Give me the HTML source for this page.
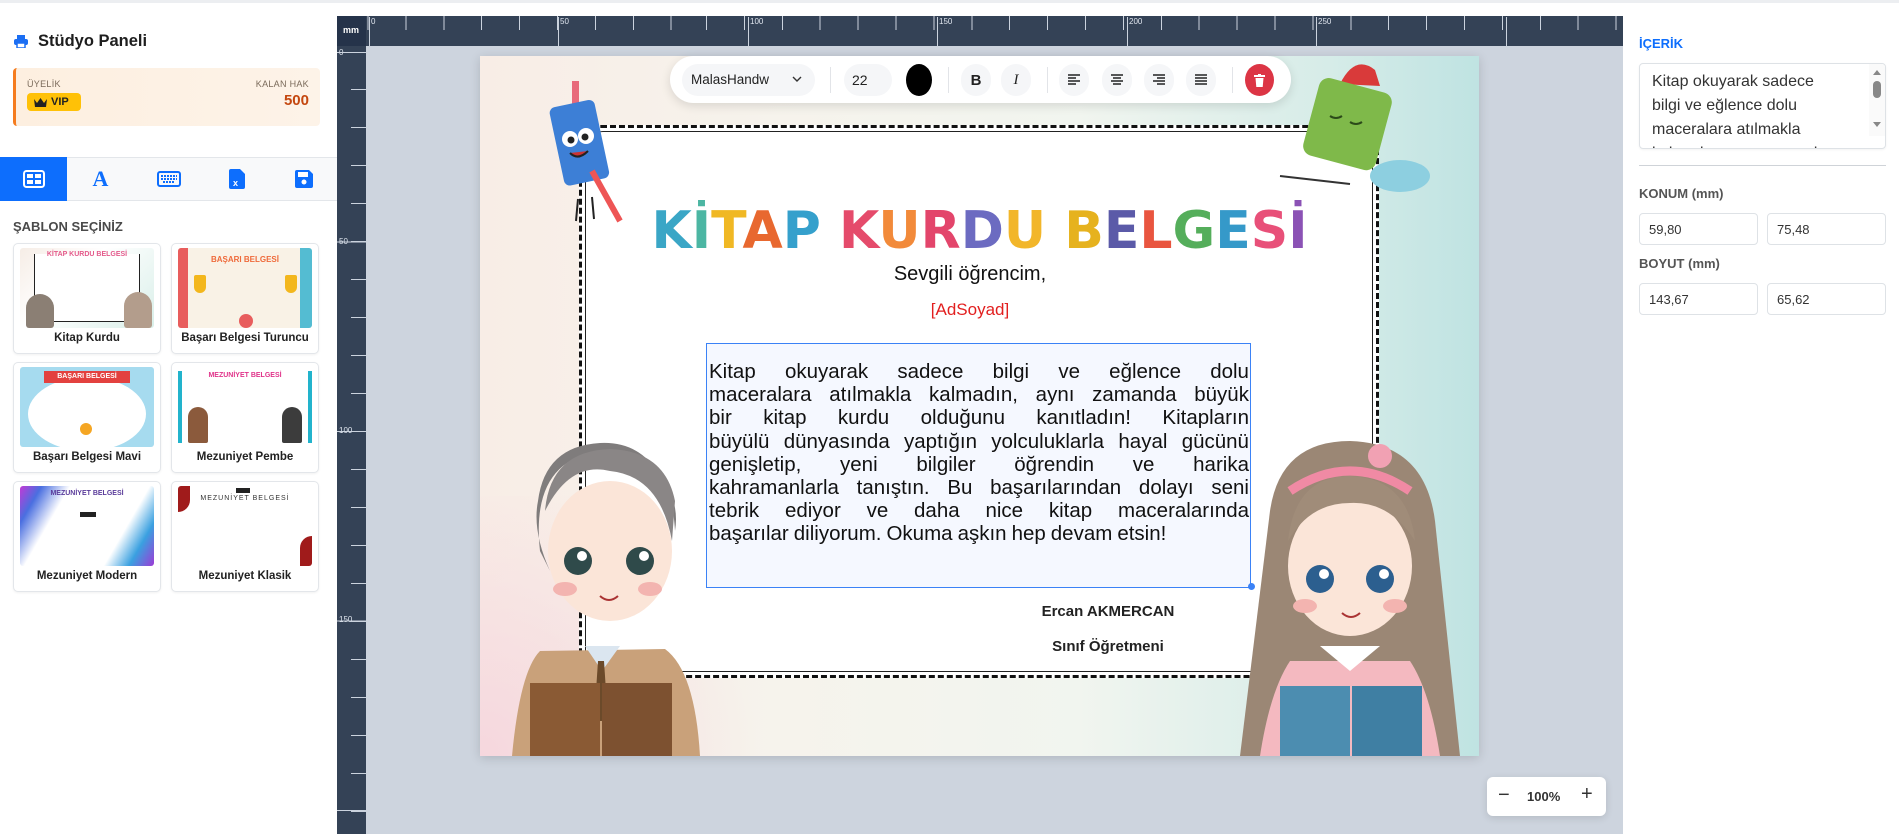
<!DOCTYPE html>
<html><head><meta charset="utf-8">
<style>
*{box-sizing:border-box;margin:0;padding:0}
body{width:1899px;height:834px;overflow:hidden;background:#fff;font-family:"Liberation Sans",sans-serif;position:relative;color:#222}
.abs{position:absolute}
.topline{left:0;top:0;width:1899px;height:3px;background:#eceef1}
.side{left:0;top:3px;width:337px;height:831px;background:#fff}
.card{position:absolute;width:148px;height:111px;border:1px solid #e3e6ea;border-radius:5px;background:#fff;box-shadow:0 1px 2px rgba(0,0,0,.06)}
.card .th{position:absolute;left:6px;top:4px;width:134px;height:80px;border-radius:3px;overflow:hidden}
.card .lb{position:absolute;left:0;right:0;top:88px;text-align:center;font-weight:bold;font-size:11.5px;color:#222}
.tab{position:absolute;top:157px;height:42px;width:67px;display:flex;align-items:center;justify-content:center}
.inp{position:absolute;height:32px;border:1px solid #dee2e6;border-radius:4px;font-size:13px;padding:8px 9px;color:#333}
.lbl{position:absolute;font-size:13px;font-weight:bold;color:#555}
.tb-btn{position:absolute;top:64px;width:30px;height:32px;border-radius:16px;background:#f5f6f8;display:flex;align-items:center;justify-content:center}
.body div{height:23.2px;text-align:justify;text-align-last:justify;white-space:nowrap;display:flex;justify-content:space-between}
.body div.last{justify-content:flex-start;gap:5px}
</style></head><body>
<div class="abs topline"></div>

<!-- SIDEBAR -->
<div class="abs side">
 <svg class="abs" style="left:14px;top:32px" width="14" height="13" viewBox="0 0 14 13"><rect x="3" y="0" width="8" height="4" fill="#1b6ef3"/><rect x="0" y="4" width="14" height="6" rx="2" fill="#1b6ef3"/><rect x="3" y="8" width="8" height="5" fill="#fff" stroke="#1b6ef3" stroke-width="1.5"/></svg>
 <div class="abs" style="left:38px;top:29px;font-size:16.5px;font-weight:bold;color:#1e1e1e">Stüdyo Paneli</div>
 <div class="abs" style="left:13px;top:65px;width:307px;height:58px;border-radius:4px;background:linear-gradient(90deg,#fdefe0,#fdf3e8);border-left:3px solid #f57c1f">
  <div class="abs" style="left:11px;top:11px;font-size:9px;color:#7a6a5a;letter-spacing:.3px">ÜYELİK</div>
  <div class="abs" style="left:11px;top:25px;width:54px;height:18px;border-radius:4px;background:#ffc107;font-size:11px;font-weight:bold;color:#222;padding:3px 0 0 24px">VIP
   <svg class="abs" style="left:7px;top:5px" width="13" height="9" viewBox="0 0 13 9"><path d="M0 1 L3 5 L6.5 0 L10 5 L13 1 L12 9 L1 9Z" fill="#222"/></svg></div>
  <div class="abs" style="right:11px;top:11px;font-size:9px;color:#7a6a5a;letter-spacing:.3px">KALAN HAK</div>
  <div class="abs" style="right:11px;top:24px;font-size:15px;font-weight:bold;color:#c4470f">500</div>
 </div>
 <div class="abs" style="left:0;top:154px;width:337px;height:44px;border-top:1px solid #e3e6ea;border-bottom:1px solid #e3e6ea;background:#f8f9fa"></div>
 <div class="tab" style="left:0;top:154px;height:44px;background:#0d6efd"><svg width="22" height="18" viewBox="0 0 22 18"><rect x="1" y="1" width="20" height="16" rx="2.5" fill="none" stroke="#fff" stroke-width="2"/><rect x="4" y="4" width="6" height="4" fill="#fff"/><rect x="12" y="4" width="6" height="4" fill="#fff"/><rect x="4" y="10" width="6" height="4" fill="#fff"/><rect x="12" y="10" width="6" height="4" fill="#fff"/></svg></div>
 <div class="tab" style="left:67px;top:154px;height:44px"><span style="font-size:22px;font-weight:bold;color:#0d6efd;font-family:'Liberation Serif',serif">A</span></div>
 <div class="tab" style="left:135px;top:154px;height:44px"><svg width="24" height="16" viewBox="0 0 24 16"><rect x="1" y="1" width="22" height="14" rx="2" fill="none" stroke="#0d6efd" stroke-width="2"/><path d="M4 5h16M4 8h16M6 11h12" stroke="#0d6efd" stroke-width="2" stroke-dasharray="2 1"/></svg></div>
 <div class="tab" style="left:203px;top:154px;height:44px"><svg width="16" height="20" viewBox="0 0 16 20"><path d="M0 2Q0 0 2 0H11L16 5V18Q16 20 14 20H2Q0 20 0 18Z" fill="#0d6efd"/><text x="4" y="17" font-size="9" fill="#fff" font-family="Liberation Sans" font-weight="bold">x</text></svg></div>
 <div class="tab" style="left:270px;top:154px;height:44px"><svg width="18" height="18" viewBox="0 0 18 18"><path d="M0 2Q0 0 2 0H14L18 4V16Q18 18 16 18H2Q0 18 0 16Z" fill="#0d6efd"/><rect x="3" y="2" width="10" height="5" fill="#fff"/><circle cx="9" cy="12" r="2.5" fill="#fff"/></svg></div>
 <div class="abs" style="left:13px;top:216px;font-size:13px;font-weight:bold;color:#4a4a4a">ŞABLON SEÇİNİZ</div>

 <div class="card" style="left:13px;top:240px"><div class="th" style="background:linear-gradient(135deg,#f6ede6,#fff 40%,#d9efe9)"><div class="abs" style="left:14px;top:6px;width:106px;height:68px;border:1.5px solid #222;border-top:none;background:#fff"></div><div class="abs" style="left:0;right:0;top:3px;text-align:center;font-size:7px;font-weight:bold;color:#e45b8c">KİTAP KURDU BELGESİ</div><div class="abs" style="left:6px;top:46px;width:28px;height:34px;border-radius:14px 14px 3px 3px;background:#8b7f74"></div><div class="abs" style="left:104px;top:44px;width:28px;height:36px;border-radius:14px 14px 3px 3px;background:#b39d8c"></div></div><div class="lb">Kitap Kurdu</div></div>
 <div class="card" style="left:171px;top:240px"><div class="th" style="background:#f9f2e6"><div class="abs" style="left:0;top:0;width:10px;height:80px;background:#e85d5d"></div><div class="abs" style="right:0;top:0;width:12px;height:80px;background:#54bcd2"></div><div class="abs" style="left:0;right:0;top:7px;text-align:center;font-size:8px;font-weight:bold;color:#ef6a3a">BAŞARI BELGESİ</div><div class="abs" style="left:16px;top:27px;width:12px;height:18px;background:#f3b71d;border-radius:2px 2px 6px 6px"></div><div class="abs" style="left:107px;top:27px;width:12px;height:18px;background:#f3b71d;border-radius:2px 2px 6px 6px"></div><div class="abs" style="left:61px;top:66px;width:14px;height:14px;border-radius:7px;background:#e85d5d"></div></div><div class="lb">Başarı Belgesi Turuncu</div></div>
 <div class="card" style="left:13px;top:359px"><div class="th" style="background:#a6dbef"><div class="abs" style="left:8px;top:10px;width:118px;height:74px;border-radius:50%;background:#fff"></div><div class="abs" style="left:24px;top:4px;width:86px;height:12px;background:#e3413f;color:#fff;font-size:7px;text-align:center;font-weight:bold;padding-top:2px">BAŞARI BELGESİ</div><div class="abs" style="left:60px;top:56px;width:12px;height:12px;border-radius:6px;background:#f5a623"></div></div><div class="lb">Başarı Belgesi Mavi</div></div>
 <div class="card" style="left:171px;top:359px"><div class="th" style="background:#fff"><div class="abs" style="left:0;top:4px;width:4px;height:72px;background:#22b3cc"></div><div class="abs" style="right:0;top:4px;width:4px;height:72px;background:#22b3cc"></div><div class="abs" style="left:0;right:0;top:5px;text-align:center;font-size:7px;font-weight:bold;color:#e0338a">MEZUNİYET BELGESİ</div><div class="abs" style="left:10px;top:40px;width:20px;height:36px;background:#8b5a3c;border-radius:10px 10px 2px 2px"></div><div class="abs" style="left:104px;top:40px;width:20px;height:36px;background:#3c3c3c;border-radius:10px 10px 2px 2px"></div></div><div class="lb">Mezuniyet Pembe</div></div>
 <div class="card" style="left:13px;top:478px"><div class="th" style="background:linear-gradient(120deg,#c23ad6 0,#4a6fe0 12%,#fff 28%,#fff 72%,#3aa0e0 86%,#9d3ad6 100%)"><div class="abs" style="left:0;right:0;top:4px;text-align:center;font-size:7px;font-weight:bold;color:#5a3b9a">MEZUNİYET BELGESİ</div><div class="abs" style="left:60px;top:26px;width:16px;height:5px;background:#222"></div></div><div class="lb">Mezuniyet Modern</div></div>
 <div class="card" style="left:171px;top:478px"><div class="th" style="background:#fff"><div class="abs" style="left:0;top:0;width:12px;height:26px;background:#a01b1b;border-radius:0 0 12px 0"></div><div class="abs" style="right:0;bottom:0;width:12px;height:30px;background:#a01b1b;border-radius:12px 0 0 0"></div><div class="abs" style="left:0;right:0;top:9px;text-align:center;font-size:7px;color:#333;letter-spacing:1px">MEZUNİYET BELGESİ</div><div class="abs" style="left:58px;top:2px;width:14px;height:5px;background:#222"></div></div><div class="lb">Mezuniyet Klasik</div></div>
</div>

<!-- RULERS -->
<div class="abs" style="left:337px;top:16px;width:1286px;height:30px;background:#344256;
 background-image:repeating-linear-gradient(90deg,#cbd3de 0 1px,transparent 1px 37.9px);background-position:369px 0;background-size:100% 14px;background-repeat:repeat-x"></div>
<div class="abs" style="left:337px;top:16px;width:29px;height:30px;background:#25334a;color:#fff;font-size:9px;font-weight:bold;padding:9px 0 0 6px">mm</div>
<div class="abs" style="left:337px;top:46px;width:29px;height:788px;background:#344256"></div>
<div class="abs" style="left:0;top:0;font-size:8px;color:#dfe5ee">
 <div class="abs" style="left:369px;top:17px;width:1px;height:29px;background:#cbd3de"></div><div class="abs" style="left:371px;top:17px">0</div>
 <div class="abs" style="left:558px;top:17px;width:1px;height:29px;background:#cbd3de"></div><div class="abs" style="left:560px;top:17px">50</div>
 <div class="abs" style="left:748px;top:17px;width:1px;height:29px;background:#cbd3de"></div><div class="abs" style="left:750px;top:17px">100</div>
 <div class="abs" style="left:937px;top:17px;width:1px;height:29px;background:#cbd3de"></div><div class="abs" style="left:939px;top:17px">150</div>
 <div class="abs" style="left:1127px;top:17px;width:1px;height:29px;background:#cbd3de"></div><div class="abs" style="left:1129px;top:17px">200</div>
 <div class="abs" style="left:1316px;top:17px;width:1px;height:29px;background:#cbd3de"></div><div class="abs" style="left:1318px;top:17px">250</div>
 <div class="abs" style="left:1506px;top:17px;width:1px;height:29px;background:#cbd3de"></div>
 <div class="abs" style="left:339px;top:48px">0</div>
 <div class="abs" style="left:339px;top:237px">50</div>
 <div class="abs" style="left:339px;top:426px">100</div>
 <div class="abs" style="left:339px;top:615px">150</div>
</div>
<div class="abs" style="left:351px;top:46px;width:15px;height:788px;background-image:repeating-linear-gradient(180deg,transparent 0 37px,#cbd3de 37px 38px);background-position:0 6px"></div>
<div class="abs" style="left:337px;top:46px;width:29px;height:788px;background-image:repeating-linear-gradient(180deg,#cbd3de 0 1px,transparent 1px 189.5px);background-position:0 6px"></div>

<!-- CANVAS -->
<div class="abs" style="left:366px;top:46px;width:1257px;height:788px;background:#cdd4de"></div>
<div class="abs" style="left:480px;top:56px;width:999px;height:700px;overflow:hidden;background:linear-gradient(90deg,#f8ede6 0%,#f6f3ec 30%,#f1f5ef 60%,#d6ece8 85%,#bfe3e2 100%);box-shadow:0 2px 10px rgba(0,0,0,.15)">
 <div class="abs" style="left:0;bottom:0;width:300px;height:260px;background:radial-gradient(circle at 0 100%,#f6d7de,transparent 70%)"></div>
 <div class="abs" style="left:99px;top:69px;width:800px;height:553px;border:3px dashed #111;border-radius:22px;background:#fff"></div>
 <div class="abs" style="left:105px;top:75px;width:788px;height:541px;border:1.5px solid #222;border-radius:18px"></div>
 <div class="abs" style="left:0;width:999px;top:146px;text-align:center;font-size:52px;font-weight:bold;letter-spacing:0;font-family:'DejaVu Sans',sans-serif;line-height:58px">
  <span style="color:#3aa6c6">K</span><span style="color:#4cb6a3">İ</span><span style="color:#f0b824">T</span><span style="color:#e8682f">A</span><span style="color:#35a0cc">P</span> <span style="color:#e54b6b">K</span><span style="color:#f28a3a">U</span><span style="color:#e3456b">R</span><span style="color:#6c6bc1">D</span><span style="color:#f2b62a">U</span> <span style="color:#e6b21e">B</span><span style="color:#5b5aa8">E</span><span style="color:#e9553f">L</span><span style="color:#55ae5b">G</span><span style="color:#3599c9">E</span><span style="color:#e85079">S</span><span style="color:#8b52b5">İ</span></div>
 <div class="abs" style="left:0;width:980px;top:207px;text-align:center;font-size:20px;color:#111">Sevgili öğrencim,</div>
 <div class="abs" style="left:0;width:980px;top:244px;text-align:center;font-size:17px;color:#e21f1f">[AdSoyad]</div>
 <div class="abs" style="left:226px;top:287px;width:545px;height:245px;border:1.5px solid #3b82f6;background:#f5f8ff"></div>
 <div class="abs body" style="left:229px;top:304px;width:540px;font-size:20.5px;line-height:23.2px;color:#111">
  <div><span>Kitap</span><span>okuyarak</span><span>sadece</span><span>bilgi</span><span>ve</span><span>eğlence</span><span>dolu</span></div>
  <div><span>maceralara</span><span>atılmakla</span><span>kalmadın,</span><span>aynı</span><span>zamanda</span><span>büyük</span></div>
  <div><span>bir</span><span>kitap</span><span>kurdu</span><span>olduğunu</span><span>kanıtladın!</span><span>Kitapların</span></div>
  <div><span>büyülü</span><span>dünyasında</span><span>yaptığın</span><span>yolculuklarla</span><span>hayal</span><span>gücünü</span></div>
  <div><span>genişletip,</span><span>yeni</span><span>bilgiler</span><span>öğrendin</span><span>ve</span><span>harika</span></div>
  <div><span>kahramanlarla</span><span>tanıştın.</span><span>Bu</span><span>başarılarından</span><span>dolayı</span><span>seni</span></div>
  <div><span>tebrik</span><span>ediyor</span><span>ve</span><span>daha</span><span>nice</span><span>kitap</span><span>maceralarında</span></div>
  <div class="last"><span>başarılar</span><span>diliyorum.</span><span>Okuma</span><span>aşkın</span><span>hep</span><span>devam</span><span>etsin!</span></div>
 </div>
 <div class="abs" style="left:768px;top:527px;width:7px;height:7px;border-radius:4px;background:#3b82f6"></div>
 <div class="abs" style="left:528px;width:200px;top:547px;text-align:center;font-size:15px;font-weight:bold">Ercan AKMERCAN</div>
 <div class="abs" style="left:528px;width:200px;top:582px;text-align:center;font-size:15px;font-weight:bold">Sınıf Öğretmeni</div>
 <svg class="abs" style="left:68px;top:25px" width="80" height="150" viewBox="0 0 80 150"><rect x="24" y="0" width="7" height="30" fill="#e86a7a"/><rect x="8" y="22" width="46" height="80" rx="6" fill="#3d7fd6" transform="rotate(-12 30 60)"/><circle cx="22" cy="58" r="8" fill="#fff"/><circle cx="38" cy="55" r="8" fill="#fff"/><circle cx="23" cy="59" r="3.5" fill="#222"/><circle cx="37" cy="56" r="3.5" fill="#222"/><path d="M22 72 Q30 80 40 70" stroke="#222" stroke-width="2" fill="#c33"/><path d="M44 90 L72 140" stroke="#e55" stroke-width="6"/><path d="M30 118 L28 140 M44 116 L46 138" stroke="#222" stroke-width="2"/></svg>
 <svg class="abs" style="left:770px;top:0" width="190" height="140" viewBox="0 0 190 140"><path d="M90 28 Q105 -2 125 14 L130 30 Z" fill="#d93a3a"/><rect x="60" y="28" width="75" height="80" rx="10" fill="#7fb94a" transform="rotate(15 97 68)"/><ellipse cx="150" cy="120" rx="30" ry="16" fill="#8dcfe0"/><path d="M30 120 L100 128" stroke="#333" stroke-width="2"/><path d="M80 60 q6 4 12 0 M100 66 q6 4 12 0" stroke="#2c4a1a" stroke-width="2" fill="none"/></svg>
 <svg class="abs" style="left:10px;top:365px" width="230" height="335" viewBox="0 0 230 335"><path d="M50 230 Q30 250 22 335 L210 335 Q205 250 175 228 Z" fill="#c9a17a"/><path d="M95 225 L112 250 L130 225 Z" fill="#dbe6f0"/><path d="M108 240 L104 300 L118 300 L114 240Z" fill="#6b4a2a"/><rect x="40" y="262" width="70" height="73" fill="#8a5a34"/><rect x="112" y="262" width="70" height="73" fill="#7d5130"/><ellipse cx="120" cy="130" rx="62" ry="70" fill="#fbe5d8"/><path d="M50 130 Q40 40 110 30 Q180 20 185 110 Q190 80 170 55 Q150 20 110 22 Q55 25 48 80 Q42 110 60 150 Z" fill="#7f7c7c"/><path d="M55 90 Q80 40 120 50 Q170 55 182 120 L185 80 Q175 30 120 28 Q60 30 55 90Z" fill="#8a8686"/><circle cx="88" cy="140" r="14" fill="#2f4a4a"/><circle cx="150" cy="140" r="14" fill="#2f4a4a"/><circle cx="92" cy="135" r="5" fill="#fff"/><circle cx="154" cy="135" r="5" fill="#fff"/><path d="M110 175 q9 8 18 0" stroke="#a33" stroke-width="2" fill="none"/><ellipse cx="75" cy="168" rx="12" ry="7" fill="#f3b4b0"/><ellipse cx="160" cy="168" rx="12" ry="7" fill="#f3b4b0"/></svg>
 <svg class="abs" style="left:740px;top:375px" width="259" height="325" viewBox="0 0 259 325"><path d="M50 80 Q60 10 130 10 Q205 12 215 90 L240 325 L20 325 Z" fill="#9b8775"/><path d="M70 230 Q50 260 40 325 L220 325 Q210 260 190 230 Z" fill="#f4b9c0"/><path d="M100 215 L130 240 L160 215Z" fill="#fff"/><rect x="60" y="255" width="70" height="70" fill="#4c8db0"/><rect x="132" y="255" width="70" height="70" fill="#3f7fa3"/><ellipse cx="130" cy="135" rx="62" ry="70" fill="#fbe5d8"/><path d="M68 110 Q75 45 130 45 Q188 47 195 110 Q170 70 130 72 Q90 72 68 110Z" fill="#a08c79"/><path d="M70 60 Q130 20 190 60" stroke="#f08aa4" stroke-width="9" fill="none"/><circle cx="160" cy="25" r="12" fill="#f1a1b3"/><circle cx="100" cy="148" r="14" fill="#2c5f8f"/><circle cx="160" cy="148" r="14" fill="#2c5f8f"/><circle cx="104" cy="143" r="5" fill="#fff"/><circle cx="164" cy="143" r="5" fill="#fff"/><path d="M122 182 q9 8 18 0" stroke="#a33" stroke-width="2" fill="none"/><ellipse cx="85" cy="175" rx="12" ry="7" fill="#f3b4b0"/><ellipse cx="175" cy="175" rx="12" ry="7" fill="#f3b4b0"/></svg>
</div>

<!-- TOOLBAR -->
<div class="abs" style="left:670px;top:56px;width:621px;height:47px;border-radius:24px;background:#fff;box-shadow:0 3px 10px rgba(0,0,0,.12)"></div>
<div class="abs" style="left:682px;top:64px;width:133px;height:32px;border-radius:16px;background:#f5f6f8;font-size:13.5px;color:#222;padding:8px 0 0 9px">MalasHandw<svg class="abs" style="left:110px;top:12px" width="10" height="7" viewBox="0 0 10 7"><path d="M1 1 L5 5 L9 1" stroke="#333" stroke-width="1.4" fill="none"/></svg></div>
<div class="abs" style="left:830px;top:67px;width:1px;height:26px;background:#e2e4e8"></div>
<div class="abs" style="left:844px;top:64px;width:48px;height:32px;border-radius:16px;background:#f5f6f8;font-size:14px;padding:8px 0 0 8px">22</div>
<div class="abs" style="left:906px;top:64px;width:26px;height:32px;border-radius:50%;background:#000"></div>
<div class="abs" style="left:948px;top:67px;width:1px;height:26px;background:#e2e4e8"></div>
<div class="tb-btn" style="left:961px;font-weight:bold;font-size:15px">B</div>
<div class="tb-btn" style="left:1001px;font-style:italic;font-size:15px;font-family:'Liberation Serif',serif">I</div>
<div class="abs" style="left:1047px;top:67px;width:1px;height:26px;background:#e2e4e8"></div>
<div class="tb-btn" style="left:1059px"><svg width="12" height="12" viewBox="0 0 12 12"><path d="M0 1h12M0 4h8M0 7h12M0 10h8" stroke="#222" stroke-width="1.5"/></svg></div>
<div class="tb-btn" style="left:1102px"><svg width="12" height="12" viewBox="0 0 12 12"><path d="M0 1h12M2 4h8M0 7h12M2 10h8" stroke="#222" stroke-width="1.5"/></svg></div>
<div class="tb-btn" style="left:1144px"><svg width="12" height="12" viewBox="0 0 12 12"><path d="M0 1h12M4 4h8M0 7h12M4 10h8" stroke="#222" stroke-width="1.5"/></svg></div>
<div class="tb-btn" style="left:1186px"><svg width="12" height="12" viewBox="0 0 12 12"><path d="M0 1h12M0 4h12M0 7h12M0 10h12" stroke="#222" stroke-width="1.5"/></svg></div>
<div class="abs" style="left:1232px;top:67px;width:1px;height:26px;background:#e2e4e8"></div>
<div class="abs" style="left:1245px;top:64px;width:29px;height:32px;border-radius:50%;background:#dc3545;display:flex;align-items:center;justify-content:center"><svg width="11" height="13" viewBox="0 0 11 13"><rect x="0" y="1" width="11" height="2" fill="#fff"/><rect x="4" y="0" width="3" height="2" fill="#fff"/><path d="M1.5 4h8l-0.8 9h-6.4z" fill="#fff"/></svg></div>

<!-- ZOOM -->
<div class="abs" style="left:1487px;top:777px;width:119px;height:39px;border-radius:6px;background:#fff;box-shadow:0 2px 8px rgba(0,0,0,.12);font-size:13px;font-weight:bold;color:#333">
 <div class="abs" style="left:11px;top:7px;font-size:20px;font-weight:normal">−</div>
 <div class="abs" style="left:40px;top:12px">100%</div>
 <div class="abs" style="left:94px;top:6px;font-size:20px;font-weight:normal">+</div>
</div>

<!-- RIGHT PANEL -->
<div class="abs" style="left:1639px;top:36px;font-size:13px;font-weight:bold;color:#0d6efd">İÇERİK</div>
<div class="abs" style="left:1639px;top:63px;width:247px;height:86px;border:1px solid #dee2e6;border-radius:4px;overflow:hidden;box-shadow:0 1px 2px rgba(0,0,0,.05)">
 <div class="abs" style="left:12px;top:6px;width:190px;font-size:16px;line-height:24px;color:#333">Kitap okuyarak sadece bilgi ve eğlence dolu maceralara atılmakla kalmadın, aynı zamanda</div>
 <div class="abs" style="right:0;top:0;width:16px;height:72px;background:#fafafa"></div>
 <div class="abs" style="right:4px;top:6px;width:0;height:0;border-left:4px solid transparent;border-right:4px solid transparent;border-bottom:5px solid #888"></div>
 <div class="abs" style="right:4px;top:17px;width:8px;height:17px;border-radius:4px;background:#888"></div>
 <div class="abs" style="right:4px;top:58px;width:0;height:0;border-left:4px solid transparent;border-right:4px solid transparent;border-top:5px solid #888"></div>
</div>
<div class="abs" style="left:1639px;top:165px;width:247px;height:1px;background:#cfd3d8"></div>
<div class="lbl" style="left:1639px;top:186px">KONUM (mm)</div>
<div class="inp" style="left:1639px;top:213px;width:119px">59,80</div>
<div class="inp" style="left:1767px;top:213px;width:119px">75,48</div>
<div class="lbl" style="left:1639px;top:256px">BOYUT (mm)</div>
<div class="inp" style="left:1639px;top:283px;width:119px">143,67</div>
<div class="inp" style="left:1767px;top:283px;width:119px">65,62</div>
</body></html>
